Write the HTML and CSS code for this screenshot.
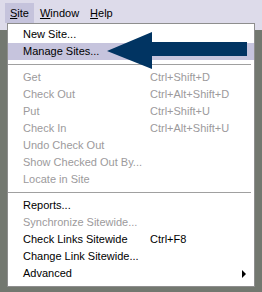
FILE: index.html
```html
<!DOCTYPE html>
<html>
<head>
<meta charset="utf-8">
<link rel="stylesheet" href="styles.css">
</head>
<body>
<div class="screen">
  <div class="menubar">
    <span class="mb-item active"><u>S</u>ite</span>
    <span class="mb-item"><u>W</u>indow</span>
    <span class="mb-item"><u>H</u>elp</span>
  </div>
  <div class="workspace">
    <div class="menu">
      <div class="item"><span>New Site...</span></div>
      <div class="item hot"><span>Manage Sites...</span></div>
      <div class="sep"></div>
      <div class="item off"><span>Get</span><span>Ctrl+Shift+D</span></div>
      <div class="item off"><span>Check Out</span><span>Ctrl+Alt+Shift+D</span></div>
      <div class="item off"><span>Put</span><span>Ctrl+Shift+U</span></div>
      <div class="item off"><span>Check In</span><span>Ctrl+Alt+Shift+U</span></div>
      <div class="item off"><span>Undo Check Out</span></div>
      <div class="item off"><span>Show Checked Out By...</span></div>
      <div class="item off"><span>Locate in Site</span></div>
      <div class="sep"></div>
      <div class="item"><span>Reports...</span></div>
      <div class="item off"><span>Synchronize Sitewide...</span></div>
      <div class="item"><span>Check Links Sitewide</span><span>Ctrl+F8</span></div>
      <div class="item"><span>Change Link Sitewide...</span></div>
      <div class="item sub"><span>Advanced</span><span class="tri"></span></div>
    </div>
  </div>
  <svg class="arrow" width="262" height="292" viewBox="0 0 262 292">
    <polygon points="107,51 152,32 152,42 247,42 247,56 152,56 152,69" fill="#013462"/>
  </svg>
</div>
</body>
</html>
```
FILE: styles.css
```css
* { box-sizing: border-box; }
html, body { margin: 0; padding: 0; }
body {
  width: 262px;
  height: 292px;
  overflow: hidden;
  font-family: "Liberation Sans", Arial, sans-serif;
  font-size: 11px;
  color: #000;
}
.screen {
  position: relative;
  width: 262px;
  height: 292px;
  background: #8a8b84;
  display: flex;
  flex-direction: column;
}
.menubar {
  height: 23px;
  background: #dddbea;
  padding: 3px 0 0 5px;
  display: flex;
}
.mb-item {
  height: 20px;
  line-height: 20px;
  padding: 0 5px;
  margin-right: 1px;
}
.mb-item.active { background: #c5c3dc; }
.workspace {
  flex: 1;
  display: flex;
  padding-left: 7px;
  background: linear-gradient(#dddbea 0, #dddbea 7px, #737870 7px);
}
.workspace::before {
  content: "";
}
.menu {
  width: 248px;
  height: 264px;
  background: #fff;
  border: 1px solid #8e8e8e;
  padding: 2px 0;
  display: flex;
  flex-direction: column;
}
.item {
  height: 17px;
  line-height: 17px;
  padding-left: 15px;
  display: grid;
  grid-template-columns: 127px 1fr;
  white-space: nowrap;
}
.item.hot { background: #c6c4dd; }
.item.off { color: #9c9a9c; }
.sep {
  height: 9px;
  padding-top: 4px;
  margin: 0 3px 0 0;
}
.sep::after {
  content: "";
  display: block;
  height: 1px;
  background: #a0a0a0;
}
.item.sub { position: relative; }
.tri {
  position: absolute;
  left: 234px;
  top: 5px;
  width: 0;
  height: 0;
  border-top: 4px solid transparent;
  border-bottom: 4px solid transparent;
  border-left: 4px solid #000;
}
.arrow {
  position: absolute;
  left: 0;
  top: 0;
  pointer-events: none;
}
```
